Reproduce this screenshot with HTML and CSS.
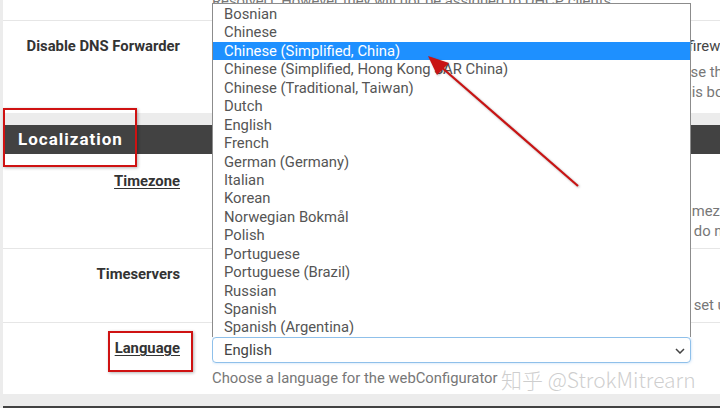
FILE: index.html
```html
<!doctype html>
<html>
<head>
<meta charset="UTF-8">
<title>General Setup</title>
<link rel="stylesheet" href="styles.css">
</head>
<body>
<div class="page">
	<div class="panel">
		<div class="row top">
			<div class="label"></div>
			<div class="field"><p class="help">Resolver). However they will not be assigned to DHCP clients.</p></div>
		</div>
		<div class="row dns">
			<div class="label">Disable DNS Forwarder</div>
			<div class="field">
				<p class="check"><span class="box"></span>Do not use the DNS Forwarder/DNS Resolver as a DNS server for the firewall</p>
				<p class="help">By default localhost (127.0.0.1) will be used as first, so that system can use the local DNS service</p>
				<p class="help">or the DNS Resolver is enabled and set to listen on localhost. Checking this box omits localhost</p>
			</div>
		</div>
	</div>

	<div class="panel">
		<h2 class="heading">Localization</h2>
		<div class="row tz">
			<div class="label"><u>Timezone</u></div>
			<div class="field">
				<div class="input">Etc/UTC</div>
				<p class="help">Select a geographic region name (Continent/Location) to determine the timezone for the</p>
				<p class="help">firewall. Choose a special or "Etc" zone only in the cases where the zones do not properly</p>
			</div>
		</div>
		<div class="row ts">
			<div class="label">Timeservers</div>
			<div class="field">
				<div class="input">2.pfsense.pool.ntp.org</div>
				<p class="help">Use a space to separate multiple hosts (only one required). Remember to set up at least</p>
			</div>
		</div>
		<div class="row lang">
			<div class="label"><u>Language</u></div>
			<div class="field">
				<div class="select">English
					<svg class="chev" width="10" height="6" viewBox="0 0 10 6"><polyline points="1,1 5,5 9,1" fill="none" stroke="#444" stroke-width="1.5"/></svg>
				</div>
				<p class="help">Choose a language for the webConfigurator</p>
			</div>
		</div>
	</div>
	<div class="panel next"></div>
</div>

<ul class="dropdown">
	<li>Bosnian</li>
	<li>Chinese</li>
	<li class="on">Chinese (Simplified, China)</li>
	<li>Chinese (Simplified, Hong Kong SAR China)</li>
	<li>Chinese (Traditional, Taiwan)</li>
	<li>Dutch</li>
	<li>English</li>
	<li>French</li>
	<li>German (Germany)</li>
	<li>Italian</li>
	<li>Korean</li>
	<li>Norwegian Bokmål</li>
	<li>Polish</li>
	<li>Portuguese</li>
	<li>Portuguese (Brazil)</li>
	<li>Russian</li>
	<li>Spanish</li>
	<li>Spanish (Argentina)</li>
</ul>

<div class="mark mark1"></div>
<div class="mark mark2"></div>

<svg class="arrow" width="720" height="408" viewBox="0 0 720 408">
	<line x1="578" y1="186" x2="440" y2="66" stroke="#c81414" stroke-width="2.2"/>
	<polygon points="428,56 449,63 437,75" fill="#c81414"/>
</svg>

<div class="watermark">知乎 @StrokMitrearn</div>
</body>
</html>
```

FILE: styles.css
```css
*{ margin:0; padding:0; box-sizing:border-box; }
html,body{ width:720px; height:408px; overflow:hidden; }
body{ background:#ececec; font-family:Roboto, "Liberation Sans", sans-serif; font-size:14.8px; color:#333; position:relative; }
ul{ list-style:none; }

.page{ padding-left:3px; white-space:nowrap; }
.panel{ background:#fff; margin-bottom:12px; }
.panel.next{ height:10px; background:#424242; margin:0; }

.row{ display:grid; grid-template-columns:177px 1fr; column-gap:32px; border-bottom:1px solid #e6e6e6; overflow:hidden; }
.row:last-child{ border-bottom:0; }
.label{ text-align:right; font-weight:bold; color:#333; line-height:20px; }
.label u{ text-decoration-thickness:1px; text-underline-offset:2px; }
.field{ overflow:hidden; }
.help{ color:#777; line-height:20px; }
.check{ color:#444; line-height:20px; }
.box{ display:inline-block; width:13px; height:13px; border:1px solid #999; border-radius:2px; margin-right:11px; vertical-align:-2px; }

.row.top{ height:21px; }
.row.top .help{ margin-top:-9px; }
.row.dns{ height:92px; padding-top:15px; }
.row.dns .check{ margin-bottom:6px; }

.heading{ background:#424242; color:#fff; font-size:17px; letter-spacing:1px; line-height:29px; height:29px; padding-left:15px; }

.input{ width:479px; height:26px; border:1px solid #ccc; border-radius:4px; line-height:24px; padding-left:11px; color:#555; }
.row.tz{ height:95px; padding-top:14px; }
.row.tz .label{ padding-top:3px; }
.row.tz .input{ margin-bottom:7px; }
.row.ts{ height:74px; padding-top:12px; }
.row.ts .label{ padding-top:3px; }
.row.ts .input{ margin-bottom:8px; }
.row.lang{ height:71px; padding-top:14px; }
.row.lang .label{ padding-top:1px; }

.select{ position:relative; width:479px; height:26px; border:1px solid #8fc0ea; border-radius:4px; box-shadow:0 0 3px rgba(70,150,230,.35); line-height:24px; padding-left:11px; color:#444; margin-bottom:5px; }
.chev{ position:absolute; right:5px; top:10px; }

.dropdown{ position:absolute; left:212px; top:3px; width:479px; height:334px; background:#fff; border:1px solid #8c8c8c; border-bottom:0; padding-top:1px; font-size:14.8px; color:#555; }
.dropdown li{ height:18.45px; line-height:18.45px; padding-left:11px; }
.dropdown li.on{ background:#1e90ff; color:#fff; }

.mark{ position:absolute; border:2px solid #cf1212; box-shadow:1px 1px 3px rgba(0,0,0,.3); }
.mark1{ left:3px; top:108px; width:134px; height:59px; }
.mark2{ left:108px; top:331px; width:85px; height:41px; }

.arrow{ position:absolute; left:0; top:0; filter:drop-shadow(1px 1px 1px rgba(0,0,0,.3)); }

.watermark{ position:absolute; left:501px; top:364px; font-family:"Noto Sans CJK SC", "Noto Sans", sans-serif; font-size:21px; font-weight:300; color:rgba(190,190,190,.75); white-space:nowrap; }
```
